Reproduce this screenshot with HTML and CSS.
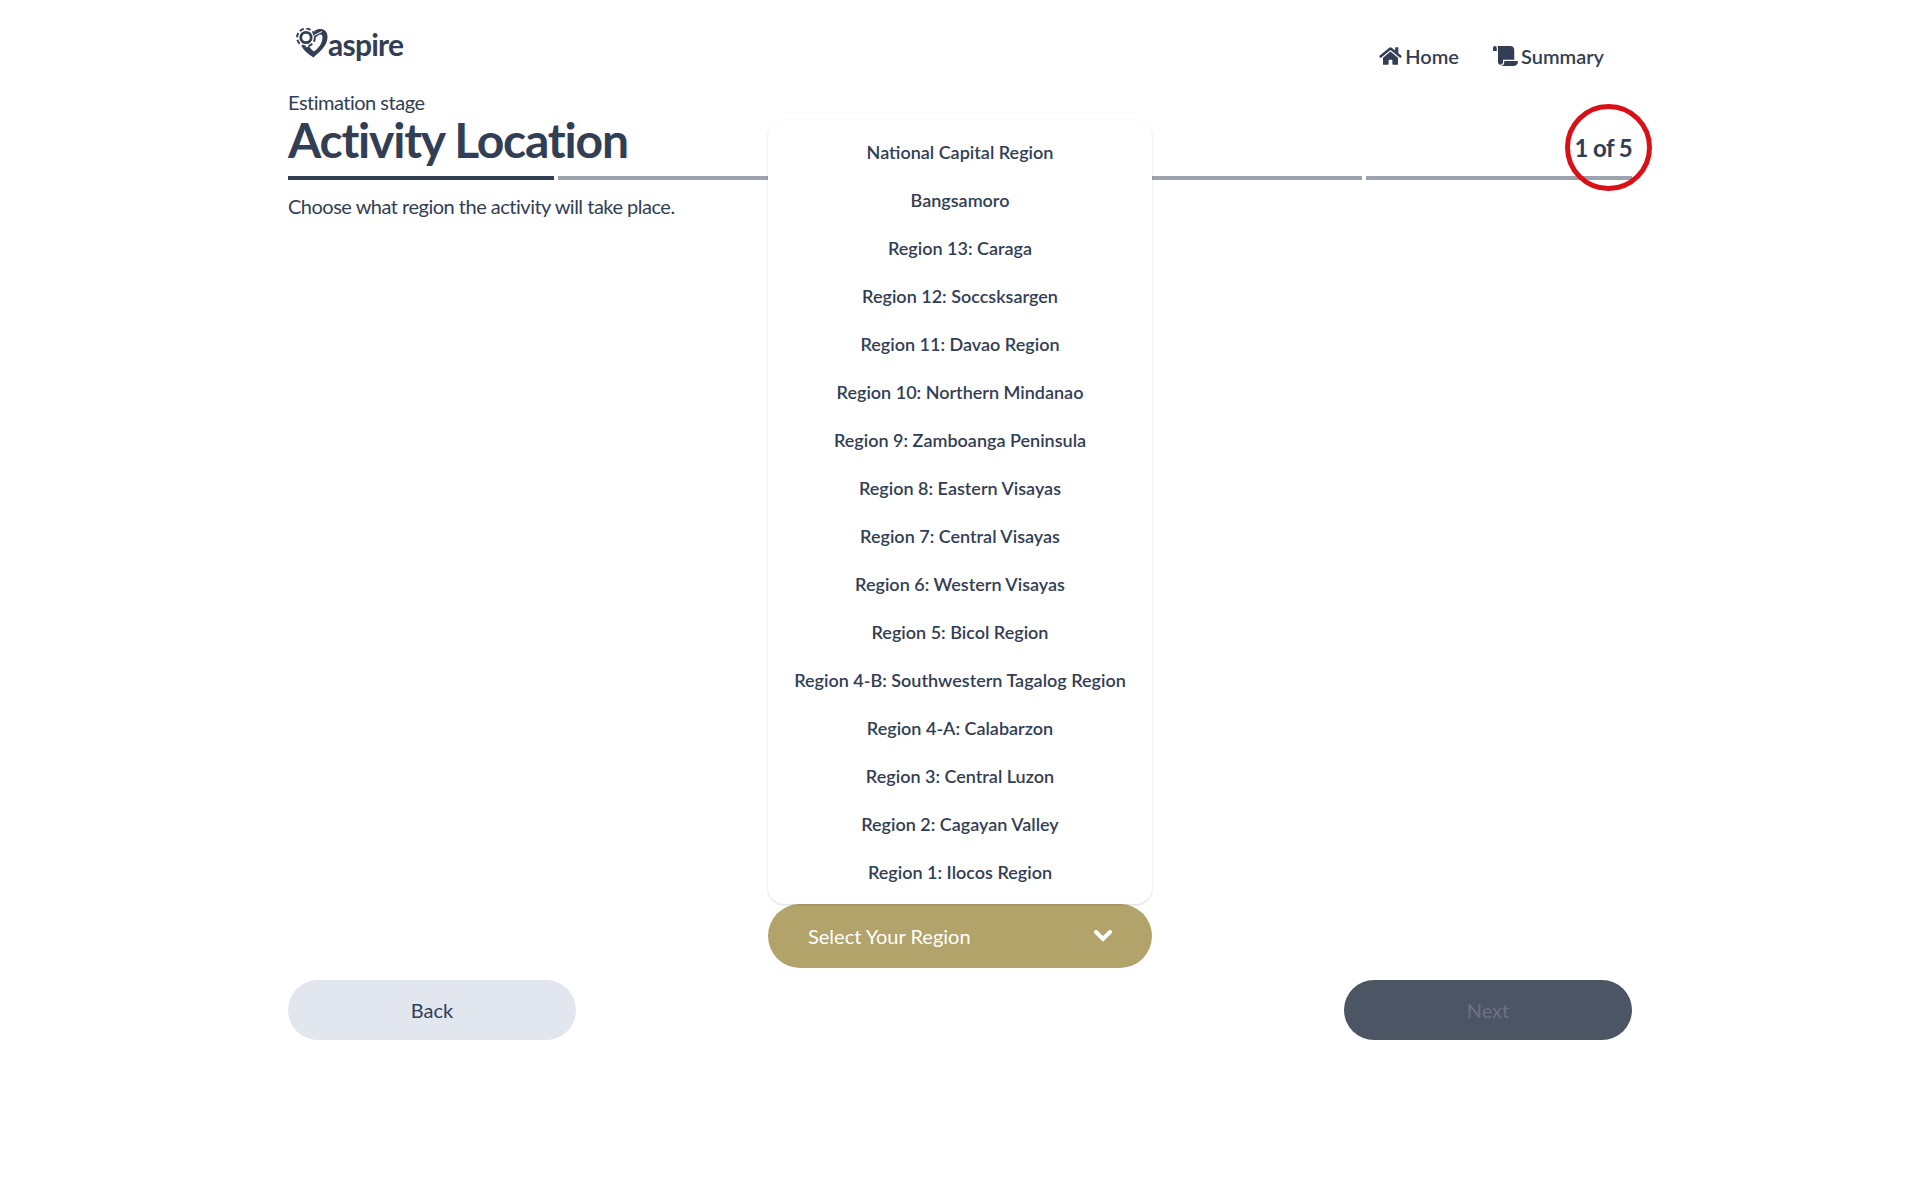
FILE: index.html
```html
<!DOCTYPE html>
<html lang="en">
<head>
  <meta charset="utf-8">
  <meta name="viewport" content="width=device-width, initial-scale=1">
  <title>Aspire - Activity Location</title>
  <link rel="stylesheet" href="styles.css">
</head>
<body>
  <div class="page">
    <header class="header">
      <a class="brand" href="#">
        <svg class="brand-icon" viewBox="0 0 32 30" aria-hidden="true">
          <path d="M18.500 3C24 -1 31.500 1 31.500 9c0 8.500-7 14-14 20.500C13 26.500 8 23 6 18.500c3 1 5 .8 7-.3 1.500 2.400 3.200 4 5 5.300 4.500-3.500 8.500-8 8.500-14.500 0-2.800-2.200-3.400-4.500-1.500l-3.500 3c-.3-1.500-.5-3-1.500-4z"/>
          <circle cx="10" cy="9.500" r="5.200" fill="none" stroke="currentColor" stroke-width="2.800"/>
          <circle cx="10" cy="9.500" r="8.900" fill="none" stroke="currentColor" stroke-width="2" stroke-dasharray="4.400 2.590"/>
          <path d="M18 7.500 26 3.500" fill="none" stroke="#fff" stroke-width="1"/>
        </svg>
        <span>aspire</span>
      </a>
      <nav class="nav">
        <a href="#">
          <svg class="icon-home" viewBox="0 0 576 512" aria-hidden="true"><path d="M280.370 148.260L96 300.110V464a16 16 0 0 0 16 16l112.060-.290a16 16 0 0 0 15.920-16V368a16 16 0 0 1 16-16h64a16 16 0 0 1 16 16v95.640a16 16 0 0 0 16 16.050L464 480a16 16 0 0 0 16-16V300L295.670 148.260a12.190 12.190 0 0 0-15.300 0zM571.600 251.470L488 182.560V44.050a12 12 0 0 0-12-12h-56a12 12 0 0 0-12 12v72.610L318.470 43a48 48 0 0 0-61 0L4.340 251.470a12 12 0 0 0-1.600 16.900l25.500 31A12 12 0 0 0 45.150 301l235.220-193.740a12.190 12.190 0 0 1 15.300 0L530.900 301a12 12 0 0 0 16.900-1.600l25.500-31a12 12 0 0 0-1.700-16.930z"/></svg>
          <span>Home</span>
        </a>
        <a href="#">
          <svg class="icon-scroll" viewBox="0 0 640 512" aria-hidden="true"><path d="M48 0C21.530 0 0 21.530 0 48v64c0 8.840 7.160 16 16 16h80V48C96 21.530 74.470 0 48 0zm208 412.570V352h288V96c0-52.940-43.060-96-96-96H111.590C121.740 13.410 128 29.920 128 48v368c0 38.870 34.650 69.650 74.750 63.120C234.220 474 256 444.460 256 412.570zM288 384v32c0 52.930-43.060 96-96 96h336c61.860 0 112-50.140 112-112 0-8.840-7.160-16-16-16H288z"/></svg>
          <span>Summary</span>
        </a>
      </nav>
    </header>

    <main class="main">
      <div class="stage">
        <div>
          <p class="text">Estimation stage</p>
          <h1 class="title">Activity Location</h1>
        </div>
        <p class="count">1 of 5<span class="ring"></span></p>
      </div>
      <div class="steps">
        <span class="step step-current"></span>
        <span class="step"></span>
        <span class="step"></span>
        <span class="step"></span>
        <span class="step"></span>
      </div>
      <p class="text">Choose what region the activity will take place.</p>

      <div class="dropdown">
        <ul class="menu" id="regions" aria-label="Regions">
          <li><button class="option" type="button">National Capital Region</button></li>
          <li><button class="option" type="button">Bangsamoro</button></li>
          <li><button class="option" type="button">Region 13: Caraga</button></li>
          <li><button class="option" type="button">Region 12: Soccsksargen</button></li>
          <li><button class="option" type="button">Region 11: Davao Region</button></li>
          <li><button class="option" type="button">Region 10: Northern Mindanao</button></li>
          <li><button class="option" type="button">Region 9: Zamboanga Peninsula</button></li>
          <li><button class="option" type="button">Region 8: Eastern Visayas</button></li>
          <li><button class="option" type="button">Region 7: Central Visayas</button></li>
          <li><button class="option" type="button">Region 6: Western Visayas</button></li>
          <li><button class="option" type="button">Region 5: Bicol Region</button></li>
          <li><button class="option" type="button">Region 4-B: Southwestern Tagalog Region</button></li>
          <li><button class="option" type="button">Region 4-A: Calabarzon</button></li>
          <li><button class="option" type="button">Region 3: Central Luzon</button></li>
          <li><button class="option" type="button">Region 2: Cagayan Valley</button></li>
          <li><button class="option" type="button">Region 1: Ilocos Region</button></li>
        </ul>
        <button class="trigger" type="button" aria-expanded="true" aria-controls="regions">
          <span>Select Your Region</span>
          <svg class="chevron" viewBox="0 0 18 12" aria-hidden="true"><path d="M2 2l7 7 7-7"/></svg>
        </button>
      </div>
    </main>

    <footer class="actions">
      <button class="action action-back" type="button">Back</button>
      <button class="action action-next" type="button" disabled>Next</button>
    </footer>
  </div>
</body>
</html>
```
FILE: styles.css
```css
* {
  box-sizing: border-box;
  margin: 0;
  padding: 0;
}

body {
  background: #fff;
  color: #323e54;
  font-family: Lato, "Liberation Sans", sans-serif;
  font-size: 20px;
  line-height: 28px;
}

button {
  border: 0;
  font: inherit;
  color: inherit;
  cursor: pointer;
}

a {
  color: inherit;
  text-decoration: none;
}

.page {
  display: flex;
  flex-direction: column;
  width: 70%;
  min-height: 100vh;
  margin: 0 auto;
  padding-bottom: 160px;
}

.header {
  display: flex;
  justify-content: space-between;
  align-items: flex-start;
  padding: 24px 28px 14px 8px;
}

.brand {
  display: flex;
  align-items: center;
  font-size: 30px;
  font-weight: 700;
  line-height: 40px;
  letter-spacing: -0.025em;
}

.brand-icon {
  width: 32px;
  height: 30px;
  margin-bottom: 2px;
  fill: currentColor;
}

.nav {
  display: flex;
  gap: 34px;
  padding-top: 18px;
  font-weight: 600;
  line-height: 28px;
}

.nav a {
  display: flex;
  align-items: center;
  gap: 3px;
}

.nav svg {
  height: 20px;
  fill: currentColor;
}

.icon-home {
  width: 23px;
}

.icon-scroll {
  width: 25px;
}

.main {
  display: flex;
  flex: 1;
  flex-direction: column;
  margin-top: 4px;
}

.stage {
  display: flex;
  justify-content: space-between;
  align-items: flex-end;
}

.text {
  font-weight: 400;
  letter-spacing: -0.025em;
}

.title {
  font-size: 48px;
  font-weight: 700;
  line-height: 48px;
  letter-spacing: -0.025em;
}

.count {
  position: relative;
  font-size: 24px;
  font-weight: 700;
  line-height: 32px;
  letter-spacing: -0.025em;
}

.ring {
  position: absolute;
  top: -28px;
  right: -20px;
  width: 87px;
  height: 87px;
  border: 5px solid #da1019;
  border-radius: 50%;
}

.steps {
  display: flex;
  gap: 4px;
  margin: 12px 0;
}

.step {
  flex: 1;
  height: 4px;
  background: #9ca3af;
}

.step-current {
  background: #323e54;
}

.dropdown {
  position: relative;
  width: 384px;
  margin: auto auto 0;
}

.menu {
  position: absolute;
  bottom: 100%;
  width: 100%;
  padding: 8px 0;
  border-radius: 16px;
  background: #fff;
  box-shadow: 0 1px 3px rgba(0, 0, 0, 0.1), 0 1px 2px rgba(0, 0, 0, 0.06);
  list-style: none;
}

.option {
  display: block;
  width: 100%;
  height: 48px;
  padding-bottom: 1px;
  background: none;
  font-size: 18px;
  font-weight: 600;
}

.trigger {
  display: flex;
  justify-content: space-between;
  align-items: center;
  width: 100%;
  height: 64px;
  padding: 0 40px;
  border-radius: 32px;
  background: #b1a369;
  color: #fff;
}

.chevron {
  width: 18px;
  height: 12px;
  fill: none;
  stroke: currentColor;
  stroke-width: 4;
  stroke-linecap: round;
}

.actions {
  display: flex;
  justify-content: space-between;
  margin-top: 12px;
}

.action {
  width: 288px;
  height: 60px;
  border-radius: 30px;
}

.action-back {
  background: #e2e6ef;
}

.action-next {
  background: #4c5564;
  color: #6b7280;
}
```
